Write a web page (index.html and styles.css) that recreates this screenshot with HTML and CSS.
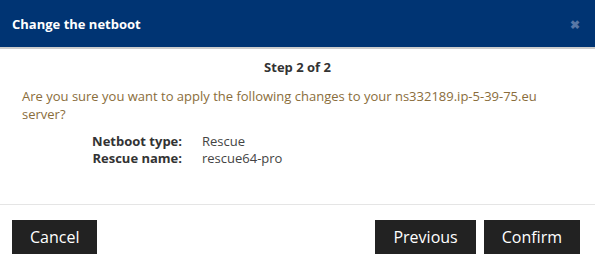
FILE: index.html
```html
<!DOCTYPE html>
<html>
<head>
<meta charset="utf-8">
<link rel="stylesheet" href="styles.css">
</head>
<body>
<div class="dialog">
  <div class="header">
    <span class="title">Change the netboot</span>
    <span class="close">&#x2716;</span>
  </div>
  <div class="content">
    <div class="step">Step 2 of 2</div>
    <p class="question">Are you sure you want to apply the following changes to your ns332189.ip-5-39-75.eu server?</p>
    <div class="details">
      <div class="label">Netboot type:</div><div class="value">Rescue</div>
      <div class="label">Rescue name:</div><div class="value">rescue64-pro</div>
    </div>
  </div>
  <div class="footer">
    <button class="btn">Cancel</button>
    <div class="right">
      <button class="btn">Previous</button>
      <button class="btn">Confirm</button>
    </div>
  </div>
</div>
</body>
</html>
```
FILE: styles.css
```css
html, body { margin: 0; padding: 0; background: #fff; }
body { font-family: "Open Sans", "Noto Sans", sans-serif; width: 595px; height: 268px; overflow: hidden; }
.dialog { display: flex; flex-direction: column; }
.header {
  height: 47px;
  background: #003473;
  border-bottom: 2px solid #cccccc;
  display: flex;
  align-items: center;
  justify-content: space-between;
  padding: 0 12px 0 12px;
}
.title { color: #fff; font-weight: 700; font-size: 13px; }
.close { color: #5877a6; font-size: 12px; font-weight: 700; margin-right: 3px; margin-top: 2px; }
.content { padding: 9px 22px 0 22px; height: 146px; border-bottom: 1px solid #e5e5e5; }
.step { text-align: center; font-weight: 700; font-size: 13px; line-height: 18px; color: #333; }
.question { margin: 11px 0 10px 0; font-size: 13px; line-height: 18px; color: #8a6d3b; }
.details { display: grid; grid-template-columns: 160px auto; column-gap: 20px; font-size: 13px; line-height: 17px; color: #333; }
.label { text-align: right; font-weight: 700; }
.value { color: #444; }
.footer { display: flex; justify-content: space-between; padding: 15px 15px 0 12px; }
.right { display: flex; gap: 8px; }
.btn {
  height: 34px;
  background: #222;
  color: #fff;
  border: none;
  font-family: "Open Sans", "Noto Sans", sans-serif;
  font-size: 16px;
  padding: 0 18px;
  cursor: pointer;
}
```
